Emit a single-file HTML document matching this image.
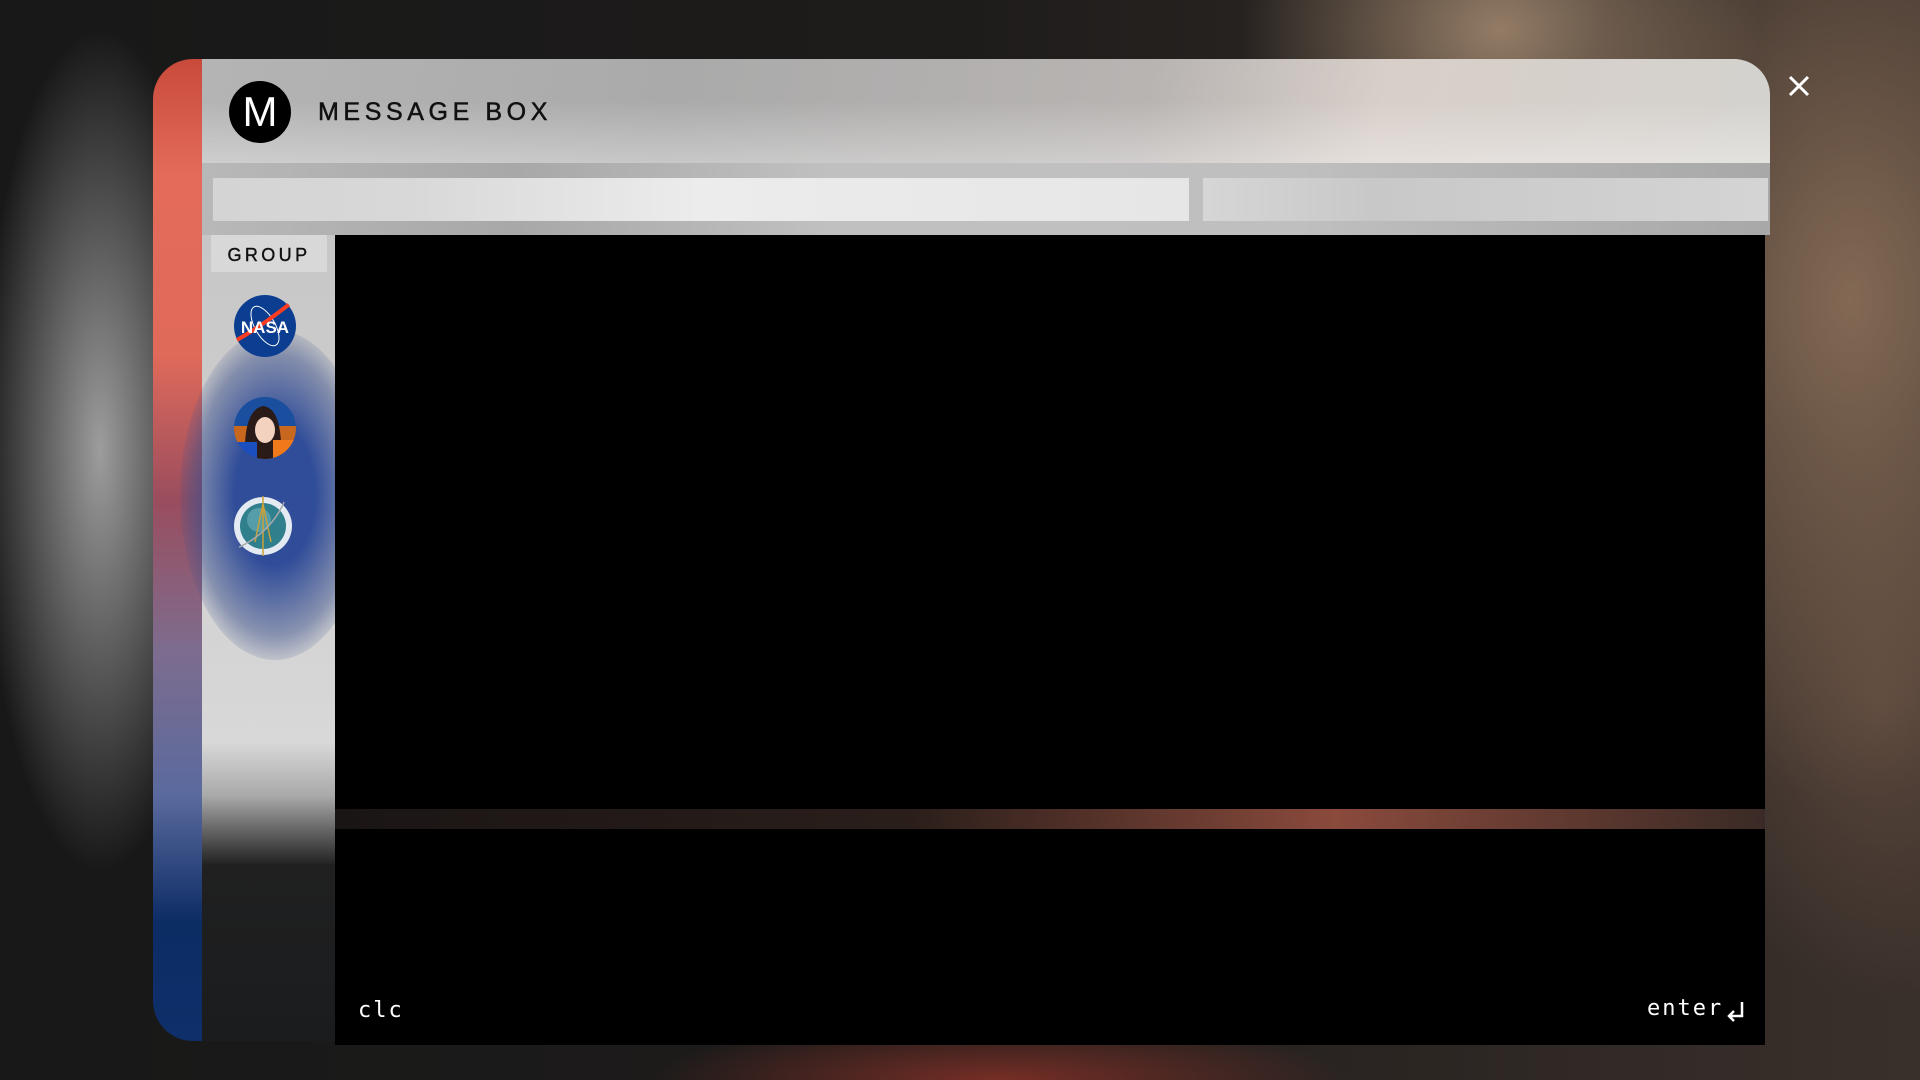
<!DOCTYPE html>
<html><head><meta charset="utf-8"><style>
*{margin:0;padding:0;box-sizing:border-box}
html,body{width:1920px;height:1080px;overflow:hidden;background:#1a1a1a;font-family:"Liberation Sans",sans-serif}
.bg{position:absolute;inset:0;background:
radial-gradient(ellipse 260px 200px at 1500px 30px,rgba(190,160,130,.7),transparent),
radial-gradient(ellipse 300px 500px at 1850px 300px,rgba(150,120,95,.8),transparent),
radial-gradient(ellipse 200px 300px at 1880px 700px,rgba(110,85,70,.6),transparent),
radial-gradient(ellipse 350px 60px at 1000px 1080px,rgba(140,50,40,.8),transparent),
radial-gradient(ellipse 120px 420px at 100px 450px,rgba(190,190,190,.8),transparent),
linear-gradient(90deg,#181818,#1e1c1b 50%,#3a302b)}
.strip{position:absolute;left:153px;top:59px;width:49px;height:982px;border-radius:40px 0 0 40px;background:linear-gradient(180deg,#c84a3a 0%,#e46b5a 12%,#e06a5a 30%,#9a4d5e 45%,#7e6c8e 60%,#5a6a9e 75%,#0c2c64 88%,#0e2f6a 100%)}
.side{position:absolute;left:202px;top:163px;width:133px;height:878px;background:linear-gradient(180deg,#c4c4c4 0%,#d8d8d8 66%,#aaa 72%,#202020 80%,#1a1c1e 100%)}
.glow{position:absolute;left:180px;top:330px;width:190px;height:330px;border-radius:50%;background:radial-gradient(ellipse at center,rgba(40,70,150,.95) 30%,rgba(60,80,140,.5) 60%,transparent 75%)}
.header{position:absolute;left:202px;top:59px;width:1568px;height:104px;border-radius:0 36px 0 0;background:linear-gradient(100deg,#b4b4b4 0%,#aaa 30%,#b8b4b2 60%,#d8cfc9 75%,#d4d2ce 100%)}
.header::after{content:"";position:absolute;inset:0;background:linear-gradient(180deg,transparent 40%,rgba(255,255,255,.35));border-radius:0 36px 0 0}
.mid{position:absolute;left:202px;top:163px;width:1568px;height:72px;background:linear-gradient(90deg,#b8b8b8,#a8a8a8 20%,#c0c0c0 40%,#bfbfbf 70%,#a8a8a8 100%)}
.search1{position:absolute;left:213px;top:178px;width:976px;height:43px;background:linear-gradient(90deg,#d4d4d4,#d8d8d8 20%,#ececec 50%,#e6e6e6 100%)}
.search2{position:absolute;left:1203px;top:178px;width:565px;height:43px;background:linear-gradient(90deg,#d6d6d6,#c8c8c8 30%,#d4d4d4 100%)}
.logo{position:absolute;left:229px;top:81px;width:62px;height:62px;border-radius:50%;background:#000;color:#fff;font-size:42px;text-align:center;line-height:62px}
.title{position:absolute;left:318px;top:98px;font-size:25px;letter-spacing:4.6px;color:#111;-webkit-text-stroke:.5px #111}
.group{position:absolute;left:211px;top:235px;width:116px;height:37px;background:#d8d8d8;font-size:18px;letter-spacing:3.4px;text-align:center;line-height:40px;color:#111;-webkit-text-stroke:.4px #111}
.main{position:absolute;left:335px;top:235px;width:1430px;height:574px;background:#000}
.gap{position:absolute;left:335px;top:809px;width:1430px;height:20px;background:linear-gradient(90deg,#1a1515,#2a1e1a 40%,#8a4a3c 70%,#3a2a25 100%)}
.input{position:absolute;left:335px;top:829px;width:1430px;height:216px;background:#000}
.mono{position:absolute;font-family:"DejaVu Sans Mono","Liberation Mono",monospace;color:#fff;font-size:22px;letter-spacing:2px}
.av{position:absolute;width:64px;height:64px;border-radius:50%}
.close{position:absolute;left:1787px;top:74px}
</style></head><body>
<div class="bg"></div>
<div class="strip"></div>
<div class="side"></div>
<div class="glow"></div>
<div class="header"></div>
<div class="mid"></div>
<div class="search1"></div>
<div class="search2"></div>
<div class="logo">M</div>
<div class="title">MESSAGE BOX</div>
<div class="group">GROUP</div>
<svg class="av" style="left:233px;top:294px" viewBox="0 0 64 64"><circle cx="32" cy="32" r="31" fill="#0b3d91"/><ellipse cx="32" cy="32" rx="22" ry="10" fill="none" stroke="#fff" stroke-width="1" transform="rotate(60 32 32)"/><path d="M4 46 Q32 30 64 4" stroke="#fc3d21" stroke-width="4" fill="none"/><text x="32" y="39" font-family="Liberation Sans" font-weight="bold" font-size="17" fill="#fff" text-anchor="middle">NASA</text></svg>
<svg class="av" style="left:233px;top:396px" viewBox="0 0 64 64"><clipPath id="c"><circle cx="32" cy="32" r="31"/></clipPath><g clip-path="url(#c)"><rect width="64" height="64" fill="#1a4fa0"/><rect x="0" y="30" width="64" height="34" fill="#c8681f"/><path d="M12 64 Q10 14 30 10 Q50 12 48 64Z" fill="#2a1a18"/><ellipse cx="32" cy="34" rx="10" ry="13" fill="#f3d2c0"/><rect x="40" y="44" width="24" height="20" fill="#f07a1a"/><rect x="0" y="46" width="24" height="18" fill="#1b4fc0"/></g></svg>
<svg class="av" style="left:231px;top:494px" viewBox="0 0 64 64"><circle cx="32" cy="32" r="29" fill="#e4eaf2"/><circle cx="32" cy="32" r="23" fill="#2f7f8c"/><circle cx="28" cy="26" r="12" fill="#6fb3bd" opacity=".6"/><path d="M32 2 L32 62 M32 10 L24 48 M32 10 L40 48" stroke="#c9a03a" stroke-width="1.5" fill="none"/><path d="M2 56 Q40 40 54 6" stroke="#aaa" stroke-width="1.5" fill="none"/></svg>
<div class="main"></div>
<div class="gap"></div>
<div class="input"></div>
<div class="mono" style="left:358px;top:998px">clc</div>
<div class="mono" style="left:1647px;top:996px">enter</div>
<svg style="position:absolute;left:1725px;top:1000px" width="22" height="22" viewBox="0 0 22 22"><path d="M17 2 V16 H5 M9 11 L4 16 L9 21" stroke="#fff" stroke-width="2.5" fill="none"/></svg>
<svg class="close" width="24" height="24" viewBox="0 0 24 24"><path d="M3 3 L21 21 M21 3 L3 21" stroke="#fff" stroke-width="3"/></svg>
</body></html>
